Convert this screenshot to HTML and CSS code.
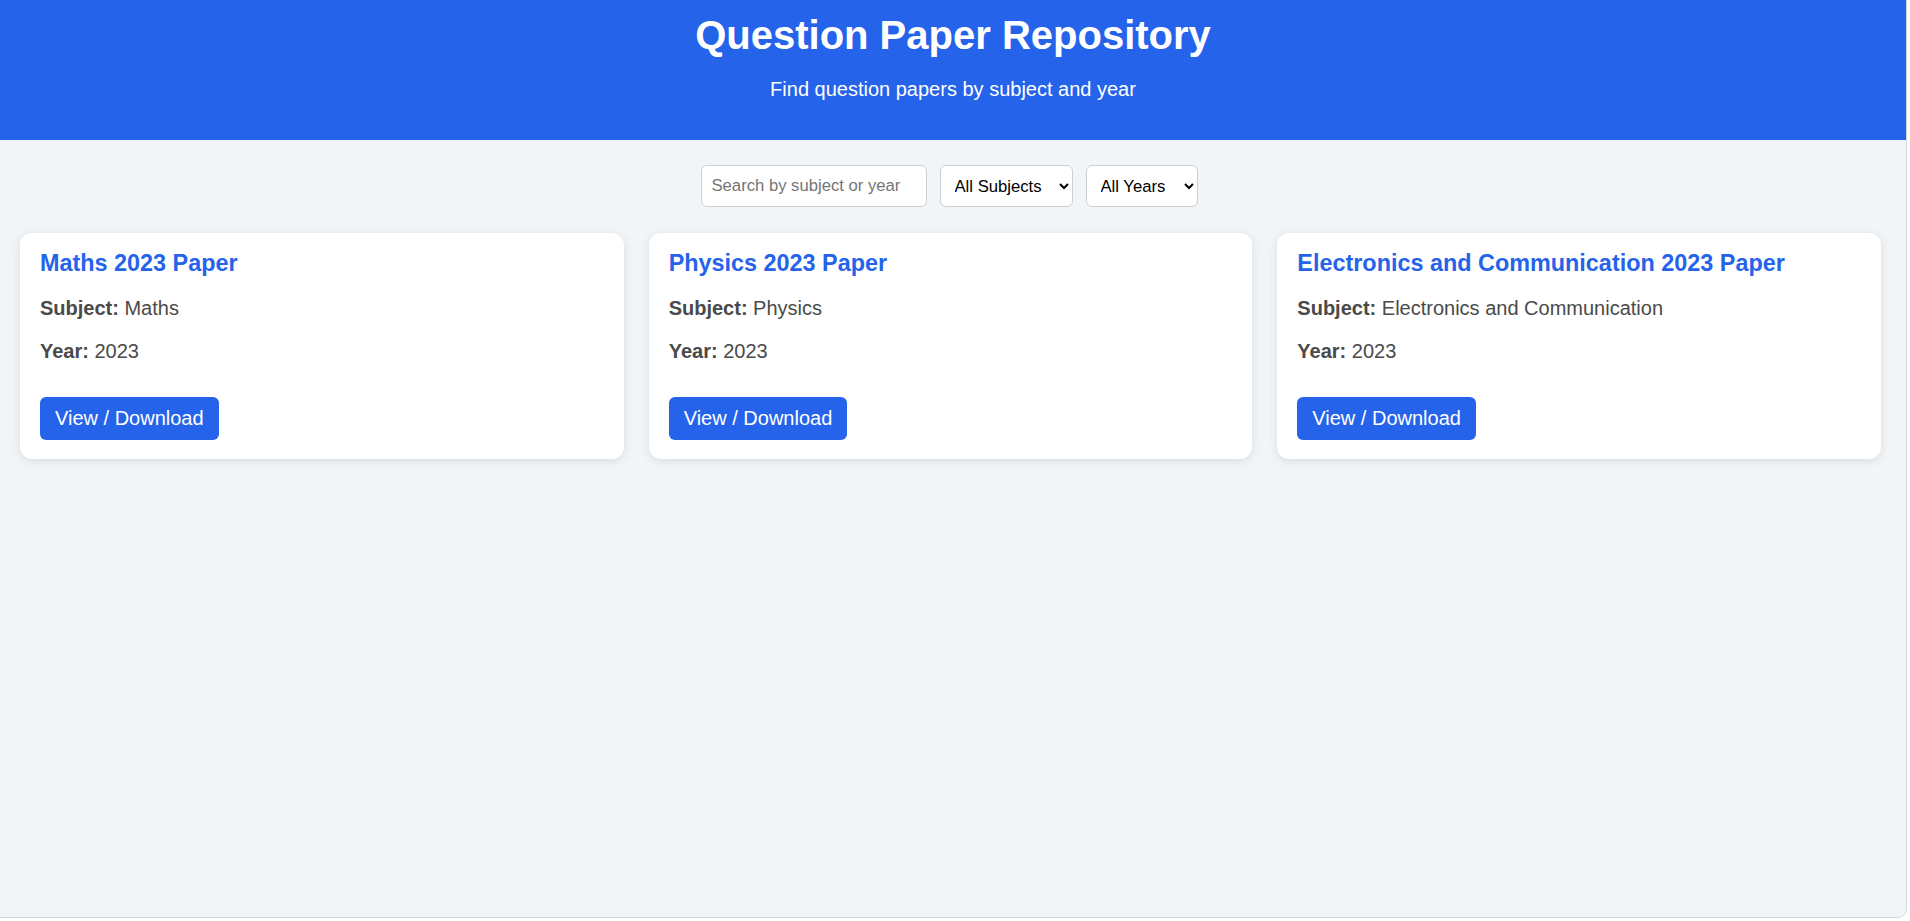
FILE: index.html
```html
<!DOCTYPE html>
<html lang="en">
<head>
<meta charset="utf-8">
<title>Question Paper Repository</title>
<link rel="stylesheet" href="styles.css">
</head>
<body>
<div class="frame">
  <header class="site-header">
    <h1 class="site-title">Question Paper Repository</h1>
    <p class="site-subtitle">Find question papers by subject and year</p>
  </header>
  <div class="controls">
    <input class="search" type="text" placeholder="Search by subject or year">
    <select class="filter filter-subject">
      <option>All Subjects</option>
      <option>Maths</option>
      <option>Physics</option>
      <option>Electronics and Communication</option>
    </select>
    <select class="filter filter-year">
      <option>All Years</option>
      <option>2023</option>
    </select>
  </div>
  <main class="grid">
    <div class="card">
      <h3 class="card-title">Maths 2023 Paper</h3>
      <p class="card-line"><strong>Subject:</strong> Maths</p>
      <p class="card-line"><strong>Year:</strong> 2023</p>
      <a class="btn" href="#">View / Download</a>
    </div>
    <div class="card">
      <h3 class="card-title">Physics 2023 Paper</h3>
      <p class="card-line"><strong>Subject:</strong> Physics</p>
      <p class="card-line"><strong>Year:</strong> 2023</p>
      <a class="btn" href="#">View / Download</a>
    </div>
    <div class="card">
      <h3 class="card-title">Electronics and Communication 2023 Paper</h3>
      <p class="card-line"><strong>Subject:</strong> Electronics and Communication</p>
      <p class="card-line"><strong>Year:</strong> 2023</p>
      <a class="btn" href="#">View / Download</a>
    </div>
  </main>
</div>
</body>
</html>
```
FILE: styles.css
```css
html, body {
  margin: 0;
  padding: 0;
  background: #ffffff;
}

body {
  font-family: "Liberation Sans", Arial, sans-serif;
  font-size: 20px;
  color: #4a4a4a;
}

.frame {
  box-sizing: border-box;
  width: 1907px;
  height: 918px;
  background: #f2f5f8;
  border-right: 1px solid #d6d8db;
  border-bottom: 1px solid #d6d8db;
  border-bottom-right-radius: 9px;
  overflow: hidden;
}

.site-header {
  background: #2563eb;
  color: #fff;
  text-align: center;
  padding: 12px 20px 19px;
}

.site-title {
  margin: 0;
  font-size: 40px;
  line-height: 46px;
  font-weight: bold;
}

.site-subtitle {
  margin: 20px 0;
  font-size: 20px;
  line-height: 23px;
}

.controls {
  display: flex;
  justify-content: center;
  align-items: center;
  gap: 13px;
  padding: 25px 28px 26px 20px;
}

.search,
.filter {
  box-sizing: border-box;
  height: 42px;
  font-family: "Liberation Sans", Arial, sans-serif;
  font-size: 16.67px;
  border: 1px solid #cfcfcf;
  border-radius: 6px;
  background: #fff;
  color: #000;
}

.search {
  width: 226px;
  padding: 0 10px;
}

.search::placeholder {
  color: #757575;
}

.filter {
  padding: 0 6px 0 10px;
}

.filter-subject {
  width: 133px;
}

.filter-year {
  width: 112px;
}

.grid {
  display: grid;
  grid-template-columns: repeat(3, 1fr);
  gap: 25px;
  padding: 0 25px 0 20px;
}

.card {
  background: #fff;
  border-radius: 12px;
  padding: 17px 20px 19px;
  box-shadow: 0 2px 10px rgba(0, 0, 0, 0.1);
}

.card-title {
  margin: 0 0 12px;
  color: #2563eb;
  font-size: 23.4px;
  line-height: 27px;
  font-weight: bold;
}

.card-line {
  margin: 20px 0;
  font-size: 20px;
  line-height: 23px;
  color: #4a4a4a;
}

.btn {
  display: inline-block;
  margin-top: 14px;
  padding: 10px 15px;
  background: #2563eb;
  color: #fff;
  text-decoration: none;
  border-radius: 6px;
  font-size: 20px;
  line-height: 23px;
}
```
